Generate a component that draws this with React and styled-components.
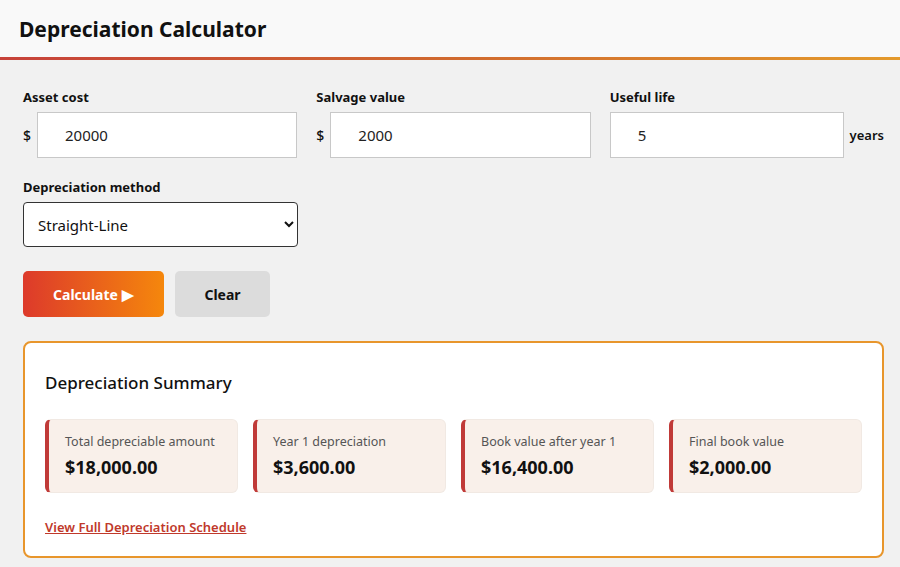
import React, { useState } from "react";
import styled, { createGlobalStyle } from "styled-components";

const GlobalStyle = createGlobalStyle`
  html, body {
    margin: 0;
    padding: 0;
    background: #f1f1f1;
    font-family: "Noto Sans", "Open Sans", sans-serif;
    color: #111;
  }
  * {
    box-sizing: border-box;
  }
`;

const Header = styled.header`
  background: #f9f9f9;
  height: 60px;
  padding: 15px 19px 0;
  border-bottom: 3px solid transparent;
  border-image: linear-gradient(90deg, #c7423a 0%, #d0692f 50%, #e49a2c 100%) 1;
`;

const Title = styled.h1`
  margin: 0;
  font-size: 21px;
  font-weight: 700;
  color: #111;
  line-height: 28px;
`;

const Main = styled.main`
  padding: 28px 16px 10px 23px;
`;

const FieldGrid = styled.div`
  display: grid;
  grid-template-columns: repeat(3, minmax(0, 1fr));
  column-gap: 19px;
`;

const Field = styled.div`
  display: flex;
  flex-direction: column;
`;

const Label = styled.label`
  font-size: 13px;
  font-weight: 700;
  margin-bottom: 6px;
  line-height: 18px;
`;

const InputRow = styled.div`
  display: flex;
  align-items: center;
  gap: 6px;
`;

const Affix = styled.span`
  font-size: ${(p) => (p.$bold ? "13px" : "14px")};
  font-weight: ${(p) => (p.$bold ? 600 : 500)};
  color: #111;
`;

const TextInput = styled.input`
  flex: 1;
  min-width: 0;
  height: 46px;
  border: 1px solid #c8c8c8;
  background: #fff;
  padding: 0 0 0 27px;
  font-family: inherit;
  font-size: 15px;
  color: #222;
  outline: none;
`;

const MethodField = styled(Field)`
  width: 275px;
  margin-top: 20px;
`;

const Select = styled.select`
  height: 45px;
  border: 1px solid #333;
  border-radius: 4px;
  background: #fff;
  padding: 0 8px 0 10px;
  font-family: inherit;
  font-size: 15px;
  color: #111;
`;

const Actions = styled.div`
  display: flex;
  gap: 11px;
  margin-top: 24px;
`;

const Button = styled.button`
  display: flex;
  align-items: center;
  justify-content: center;
  gap: 4px;
  height: 46px;
  border: none;
  border-radius: 5px;
  font-family: inherit;
  font-size: 14px;
  font-weight: 700;
  cursor: pointer;
  width: ${(p) => p.$width}px;
  color: ${(p) => (p.$primary ? "#fff" : "#111")};
  background: ${(p) =>
    p.$primary ? "linear-gradient(90deg, #dd3a2b 0%, #f5870c 100%)" : "#dcdcdc"};
`;

const Arrow = styled.span`
  font-size: 15px;
  line-height: 1;
`;

const Summary = styled.section`
  margin-top: 24px;
  background: #fff;
  border: 2px solid #e8962c;
  border-radius: 8px;
  padding: 28px 20px 19px;
`;

const SummaryTitle = styled.h2`
  margin: 0 0 24px;
  font-size: 17px;
  font-weight: 500;
  color: #111;
  line-height: 24px;
`;

const StatGrid = styled.div`
  display: grid;
  grid-template-columns: repeat(4, minmax(0, 1fr));
  gap: 15px;
`;

const Stat = styled.div`
  background: #f9f0ea;
  border: 1px solid #f1e9e3;
  border-left: 4px solid #c03a38;
  border-radius: 6px;
  height: 74px;
  padding: 13px 16px 12px;
`;

const StatLabel = styled.div`
  font-size: 12.5px;
  color: #555;
  line-height: 18px;
`;

const StatValue = styled.div`
  font-size: 18px;
  font-weight: 700;
  color: #111;
  margin-top: 4px;
  line-height: 24px;
`;

const ScheduleLink = styled.a`
  display: inline-block;
  margin-top: 25px;
  font-size: 13px;
  font-weight: 600;
  color: #c0392b;
  text-decoration: underline;
  cursor: pointer;
`;

const stats = [
  { label: "Total depreciable amount", value: "$18,000.00" },
  { label: "Year 1 depreciation", value: "$3,600.00" },
  { label: "Book value after year 1", value: "$16,400.00" },
  { label: "Final book value", value: "$2,000.00" },
];

export default function App() {
  const [cost, setCost] = useState("20000");
  const [salvage, setSalvage] = useState("2000");
  const [life, setLife] = useState("5");

  return (
    <>
      <GlobalStyle />
      <Header>
        <Title>Depreciation Calculator</Title>
      </Header>
      <Main>
        <FieldGrid>
          <Field>
            <Label>Asset cost</Label>
            <InputRow>
              <Affix>$</Affix>
              <TextInput value={cost} onChange={(e) => setCost(e.target.value)} />
            </InputRow>
          </Field>
          <Field>
            <Label>Salvage value</Label>
            <InputRow>
              <Affix>$</Affix>
              <TextInput value={salvage} onChange={(e) => setSalvage(e.target.value)} />
            </InputRow>
          </Field>
          <Field>
            <Label>Useful life</Label>
            <InputRow>
              <TextInput value={life} onChange={(e) => setLife(e.target.value)} />
              <Affix $bold>years</Affix>
            </InputRow>
          </Field>
        </FieldGrid>

        <MethodField>
          <Label>Depreciation method</Label>
          <Select defaultValue="straight">
            <option value="straight">Straight-Line</option>
            <option value="declining">Declining Balance</option>
            <option value="syd">Sum-of-the-Years' Digits</option>
          </Select>
        </MethodField>

        <Actions>
          <Button $primary $width={141}>
            Calculate <Arrow>▶</Arrow>
          </Button>
          <Button $width={95}>Clear</Button>
        </Actions>

        <Summary>
          <SummaryTitle>Depreciation Summary</SummaryTitle>
          <StatGrid>
            {stats.map((s) => (
              <Stat key={s.label}>
                <StatLabel>{s.label}</StatLabel>
                <StatValue>{s.value}</StatValue>
              </Stat>
            ))}
          </StatGrid>
          <ScheduleLink>View Full Depreciation Schedule</ScheduleLink>
        </Summary>
      </Main>
    </>
  );
}
